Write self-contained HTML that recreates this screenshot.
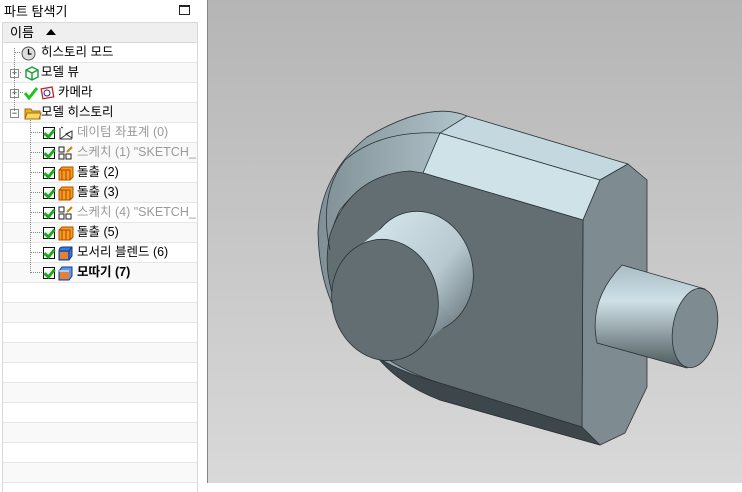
<!DOCTYPE html>
<html><head><meta charset="utf-8"><style>
*{margin:0;padding:0;box-sizing:border-box}
body{width:742px;height:483px;overflow:hidden;background:#fff;font-family:"Liberation Sans","Noto Sans CJK KR",sans-serif;font-size:12.5px;color:#000;position:relative}
.title{position:absolute;left:4px;top:1px;font-size:13px}
.maxbtn{position:absolute;left:179px;top:5px;width:11px;height:10px;border:1.5px solid #222;border-top-width:2.5px}
.list{position:absolute;left:2px;top:22px;width:196px;height:470px;border:1px solid #d8d8d8;border-bottom:none;overflow:hidden}
.hdr{height:20px;background:#efefef;border-bottom:1px solid #d8d8d8;padding-left:7px;line-height:19px;font-size:13px}
.hdr span{display:inline-block;margin-left:12px;width:0;height:0;border-left:5px solid transparent;border-right:5px solid transparent;border-bottom:6px solid #000;vertical-align:2px}
.row{height:20px;border-bottom:1px solid #e6e6e6;position:relative;line-height:19px;white-space:nowrap}
.row:nth-child(odd){background:#f9f9f9}
.row .t{position:absolute;top:0}
.g{color:#9a9a9a}
.b{font-weight:bold}
.cb{position:absolute;top:4px;width:12px;height:12px;border:1.5px solid #111;background:#fff}
.cb:after{content:"";position:absolute;left:2px;top:-1px;width:4px;height:8px;border:solid #1fa81f;border-width:0 3px 3px 0;transform:rotate(40deg)}
.ic{position:absolute;top:3px;width:15px;height:14px}
.pm{position:absolute;left:7px;top:6px;width:9px;height:9px;border:1px solid #888;background:#fff;font-size:9px;line-height:6px;text-align:center}
.vp{position:absolute;left:207px;top:0;width:535px;height:483px;background:linear-gradient(#b5b5b5,#d9d9d9);border-left:1px solid #7d878b}
</style></head><body>
<div class="title">파트 탐색기</div>
<div class="maxbtn"></div>
<div class="list">
<div class="hdr">이름<span></span></div>
<div class="row"><div class="ic" style="left:18px"><svg width="15" height="15"><circle cx="7.5" cy="7.5" r="6.5" fill="#ddd" stroke="#555"/><path d="M7.5 3v5h3" stroke="#000" fill="none" stroke-width="1.3"/></svg></div><span class="t" style="left:38px">히스토리 모드</span></div>
<div class="row"><div class="pm">+</div><div class="ic" style="left:21px"><svg width="16" height="15"><path d="M8 1l6 3v7l-6 3-6-3V4z M2 4l6 3 6-3 M8 7v7" stroke="#1a9a3a" fill="none" stroke-width="1.4"/></svg></div><span class="t" style="left:38px">모델 뷰</span></div>
<div class="row"><div class="pm">+</div><div class="ic" style="left:21px"><svg width="32" height="15"><path d="M1 7l4 5 8-10" stroke="#1fc41f" fill="none" stroke-width="3"/><rect x="18" y="2" width="11" height="10" fill="none" stroke="#c22" stroke-width="1.3" transform="rotate(-10 23 7)"/><circle cx="23" cy="7" r="3" fill="none" stroke="#22a"/></svg></div><span class="t" style="left:55px">카메라</span></div>
<div class="row"><div class="pm" style="line-height:7px">−</div><div class="ic" style="left:21px;width:18px"><svg width="18" height="14"><path d="M1 3h6l1 2h8v8H1z" fill="#e8b020" stroke="#a07010"/><path d="M3 7h14l-2 6H1z" fill="#f8d860" stroke="#a07010"/></svg></div><span class="t" style="left:38px">모델 히스토리</span></div>
<div class="row"><div class="cb" style="left:40px"></div><div class="ic" style="left:55px"><svg width="16" height="15"><path d="M2 2v11h12 M2 13l10-7 M5 2l-2-1" stroke="#333" fill="none"/><path d="M8 8l6-3v7z" fill="none" stroke="#333"/></svg></div><span class="t g" style="left:74px">데이텀 좌표계 (0)</span></div>
<div class="row"><div class="cb" style="left:40px"></div><div class="ic" style="left:55px"><svg width="16" height="15"><rect x="1" y="1" width="5" height="5" fill="none" stroke="#222"/><rect x="1" y="8" width="5" height="5" fill="none" stroke="#222"/><rect x="8" y="8" width="5" height="5" fill="none" stroke="#222"/><path d="M9 6l5-5" stroke="#d08000" stroke-width="2"/></svg></div><span class="t g" style="left:74px">스케치 (1) "SKETCH_...</span></div>
<div class="row"><div class="cb" style="left:40px"></div><div class="ic" style="left:55px"><svg width="16" height="15"><path d="M1 4l3-3h11v10l-3 3H1z" fill="#f0a020" stroke="#b05000"/><path d="M4 4v10 M8 4v10 M12 4v10 M1 4h11" stroke="#c04000"/></svg></div><span class="t" style="left:74px">돌출 (2)</span></div>
<div class="row"><div class="cb" style="left:40px"></div><div class="ic" style="left:55px"><svg width="16" height="15"><path d="M1 4l3-3h11v10l-3 3H1z" fill="#f0a020" stroke="#b05000"/><path d="M4 4v10 M8 4v10 M12 4v10 M1 4h11" stroke="#c04000"/></svg></div><span class="t" style="left:74px">돌출 (3)</span></div>
<div class="row"><div class="cb" style="left:40px"></div><div class="ic" style="left:55px"><svg width="16" height="15"><rect x="1" y="1" width="5" height="5" fill="none" stroke="#222"/><rect x="1" y="8" width="5" height="5" fill="none" stroke="#222"/><rect x="8" y="8" width="5" height="5" fill="none" stroke="#222"/><path d="M9 6l5-5" stroke="#d08000" stroke-width="2"/></svg></div><span class="t g" style="left:74px">스케치 (4) "SKETCH_...</span></div>
<div class="row"><div class="cb" style="left:40px"></div><div class="ic" style="left:55px"><svg width="16" height="15"><path d="M1 4l3-3h11v10l-3 3H1z" fill="#f0a020" stroke="#b05000"/><path d="M4 4v10 M8 4v10 M12 4v10 M1 4h11" stroke="#c04000"/></svg></div><span class="t" style="left:74px">돌출 (5)</span></div>
<div class="row"><div class="cb" style="left:40px"></div><div class="ic" style="left:55px"><svg width="16" height="15"><path d="M1 5q0-4 4-4h9v9l-3 4H1z" fill="#3a7ad8" stroke="#1a3a80"/><path d="M1 5h10v9 M11 5l3-4" stroke="#1a3a80" fill="none"/><rect x="2" y="6" width="8" height="7" fill="#e88030"/></svg></div><span class="t" style="left:74px">모서리 블렌드 (6)</span></div>
<div class="row"><div class="cb" style="left:40px"></div><div class="ic" style="left:55px"><svg width="16" height="15"><path d="M1 5l3-4h10v9l-3 4H1z" fill="#5a9ae8" stroke="#1a3a80"/><rect x="2" y="6" width="9" height="7" fill="#e88030"/><path d="M1 5h10" stroke="#fff"/></svg></div><span class="t b" style="left:74px">모따기 (7)</span></div>
<div class="row"></div><div class="row"></div><div class="row"></div><div class="row"></div><div class="row"></div><div class="row"></div><div class="row"></div><div class="row"></div><div class="row"></div><div class="row"></div>
</div>
<svg style="position:absolute;left:0;top:0" width="200" height="290">
<g stroke="#888" stroke-dasharray="1,1" fill="none">
<path d="M14.5 48v63 M15 52.5h5 M18 72.5h3 M18 92.5h5 M30.5 120v153 M31 132.5h11 M31 152.5h11 M31 172.5h11 M31 192.5h11 M31 212.5h11 M31 232.5h11 M31 252.5h11 M31 272.5h11"/>
</g></svg>
<div class="vp"></div>
<svg style="position:absolute;left:0;top:0" width="742" height="483">
<defs>
<linearGradient id="rl" x1="0" y1="0" x2="1" y2="0"><stop offset="0" stop-color="#7f8f95"/><stop offset="0.6" stop-color="#b9ccd3"/><stop offset="1" stop-color="#c9dde3"/></linearGradient>
<linearGradient id="cy" gradientUnits="userSpaceOnUse" x1="380" y1="230" x2="470" y2="340"><stop offset="0" stop-color="#d0e2e8"/><stop offset="0.5" stop-color="#b8cad0"/><stop offset="1" stop-color="#56646a"/></linearGradient>
<linearGradient id="sh" x1="0" y1="0" x2="0" y2="1"><stop offset="0" stop-color="#a9bcc3"/><stop offset="0.35" stop-color="#cfe1e7"/><stop offset="1" stop-color="#4c585c"/></linearGradient>
</defs>
<g stroke="#2a3236" stroke-width="0.8" stroke-linejoin="round">
<path d="M467 116 Q430 100 367 137 Q320 175 318 233 Q320 320 377 357 L440 400 L600 445 L582 427 L440 383 Q400 370 333 297 Q320 250 340 210 Q370 170 423 173 Z" fill="url(#rl)"/>
<path d="M440 383 L582 427 L600 445 L440 400 Q400 385 377 357 Q400 372 440 383Z" fill="#3d474b"/>
<path d="M467 116 L628 164 L600 180 L440 133Z" fill="#c3d9df"/>
<path d="M440 133 L600 180 L583 220 L423 173Z" fill="#cfe2e8"/>
<path d="M628 164 L647 180 L647 387 L625 433 L600 445 L582 427 L583 220 L600 180Z" fill="#7e8c91"/>
<path d="M423 173 L583 220 L582 427 L440 383 Q380 365 345 320 Q320 280 330 235 Q350 175 410 171Z" fill="#636e72"/>
<path d="M440 133 Q380 130 345 160 Q318 195 330 250" fill="none"/>
<ellipse cx="420" cy="272" rx="53" ry="61" transform="rotate(-12 420 272)" fill="url(#cy)"/>
<path d="M352 252 L387 224 L453 320 L418 348Z" fill="url(#cy)" stroke="none"/>
<ellipse cx="385" cy="300" rx="53" ry="61" transform="rotate(-12 385 300)" fill="#636e72"/>
<path d="M622 265 L705 289 L687 368 L597 343 Q588 300 622 265Z" fill="url(#sh)"/>
<ellipse cx="695" cy="328" rx="22" ry="40" transform="rotate(10 695 328)" fill="#7e8c91"/>
</g>
</svg>
</body></html>
